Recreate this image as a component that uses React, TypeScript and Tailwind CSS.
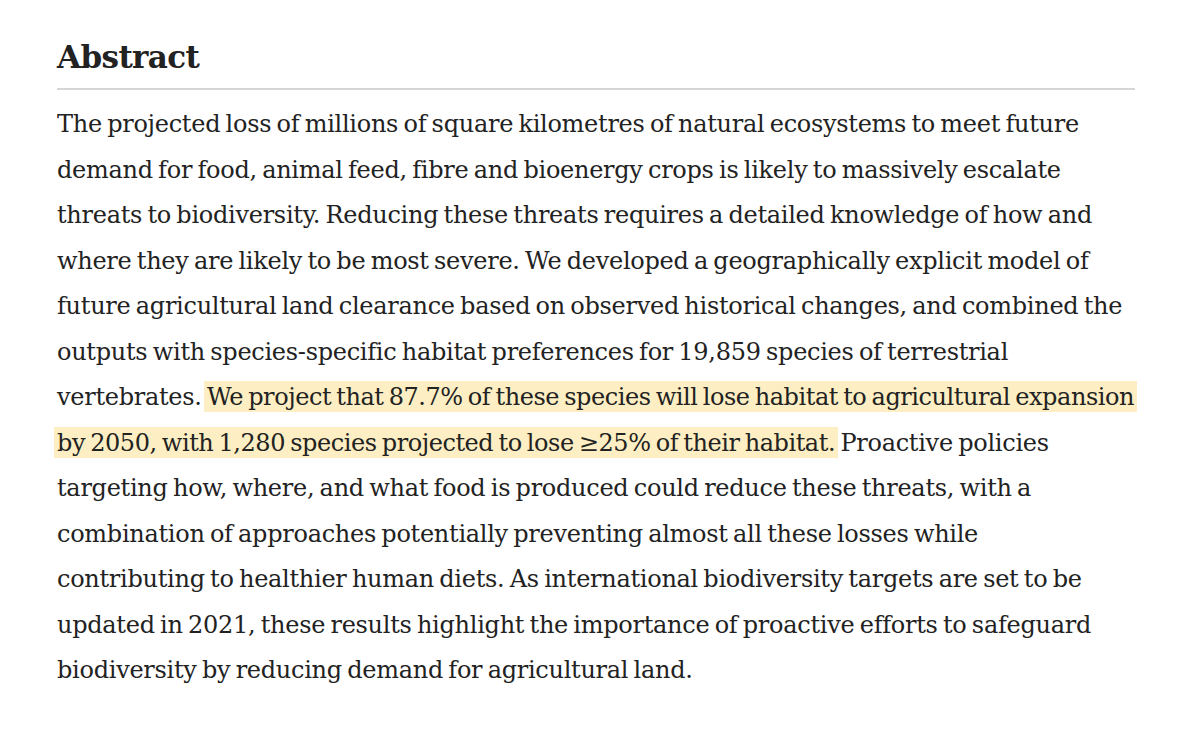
import React from "react";

const Hl = ({ children }: { children: React.ReactNode }) => (
  <span className="bg-[#fdefc3] px-[3px] -mx-[3px] pt-[2px] pb-[1px] tracking-[-0.45px]">{children}</span>
);

export default function App() {
  const lines: React.ReactNode[] = [
    "The projected loss of millions of square kilometres of natural ecosystems to meet future",
    "demand for food, animal feed, fibre and bioenergy crops is likely to massively escalate",
    "threats to biodiversity. Reducing these threats requires a detailed knowledge of how and",
    "where they are likely to be most severe. We developed a geographically explicit model of",
    "future agricultural land clearance based on observed historical changes, and combined the",
    "outputs with species-specific habitat preferences for 19,859 species of terrestrial",
    <>
      vertebrates. <Hl>We project that 87.7% of these species will lose habitat to agricultural expansion</Hl>
    </>,
    <>
      <Hl>by 2050, with 1,280 species projected to lose ≥25% of their habitat.</Hl> Proactive policies
    </>,
    "targeting how, where, and what food is produced could reduce these threats, with a",
    "combination of approaches potentially preventing almost all these losses while",
    "contributing to healthier human diets. As international biodiversity targets are set to be",
    "updated in 2021, these results highlight the importance of proactive efforts to safeguard",
    "biodiversity by reducing demand for agricultural land.",
  ];
  return (
    <div className="min-h-[746px] w-[1200px] bg-white text-[#222222] [font-family:'DejaVu_Serif',serif]">
      <div className="pl-[57px] pr-[65px] pt-[37px]">
        <h2 className="text-[31px] leading-[40px] font-bold tracking-[-0.6px]">Abstract</h2>
        <div className="mt-[11px] h-[2px] bg-[#d6d6d6]" />
        <div className="mt-[12px] text-[24px] leading-[45.5px] tracking-[-0.28px] [word-spacing:-2px]">
          {lines.map((l, i) => (
            <div key={i} className="whitespace-nowrap">
              {l}
            </div>
          ))}
        </div>
      </div>
    </div>
  );
}
